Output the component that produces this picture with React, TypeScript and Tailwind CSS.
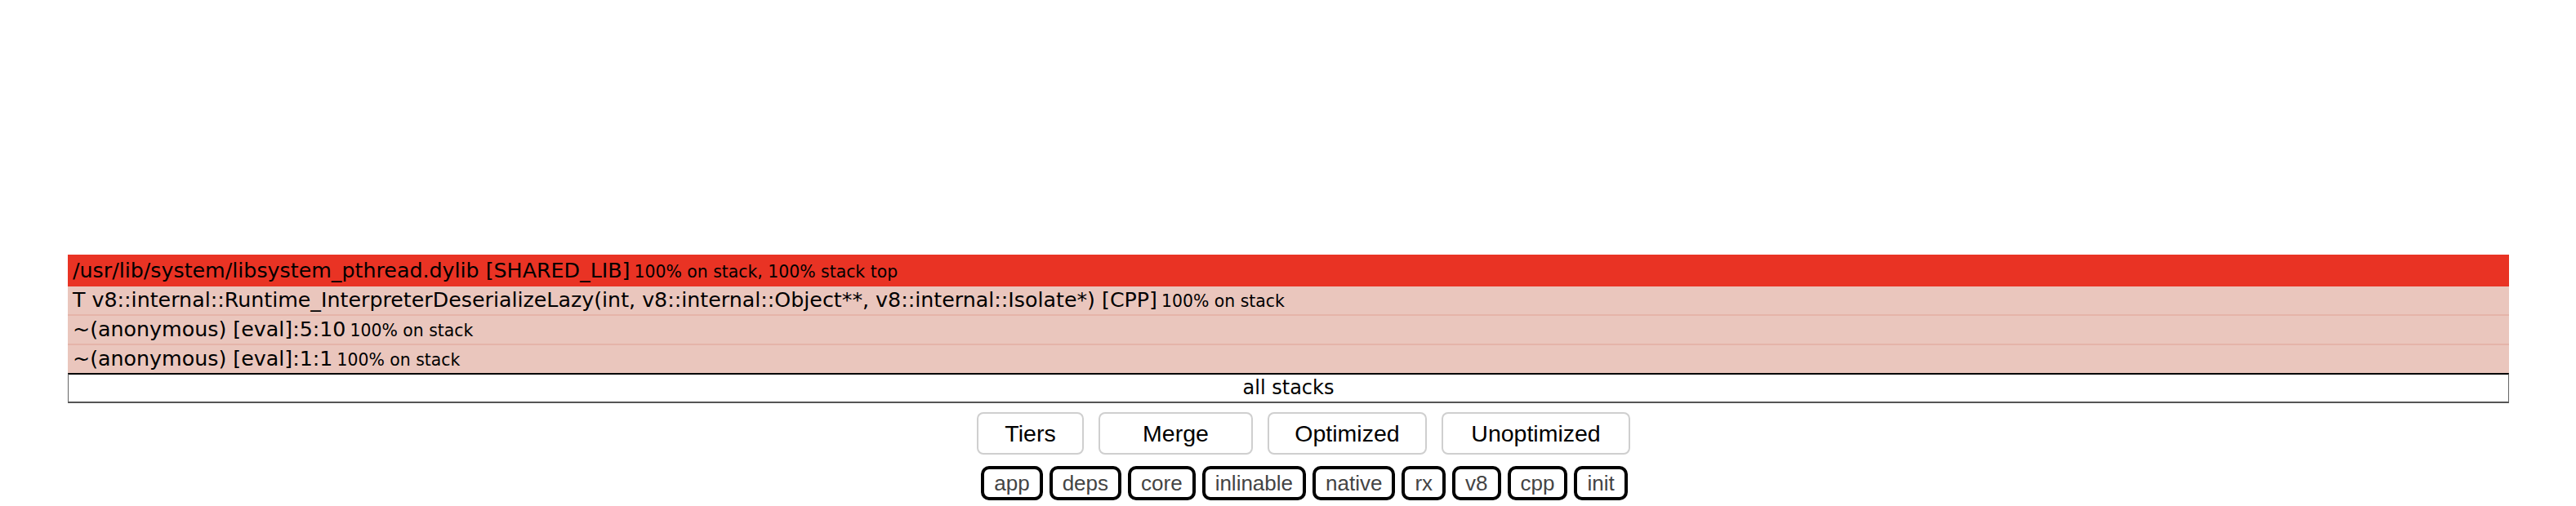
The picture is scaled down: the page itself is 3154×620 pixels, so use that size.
import React from 'react';

interface StackRow {
  name: string;
  stats: string;
  top?: boolean;
}

const ROWS: StackRow[] = [
  { name: '/usr/lib/system/libsystem_pthread.dylib [SHARED_LIB]', stats: '100% on stack, 100% stack top', top: true },
  { name: 'T v8::internal::Runtime_InterpreterDeserializeLazy(int, v8::internal::Object**, v8::internal::Isolate*) [CPP]', stats: '100% on stack' },
  { name: '~(anonymous) [eval]:5:10', stats: '100% on stack' },
  { name: '~(anonymous) [eval]:1:1', stats: '100% on stack' },
];

const MODES = [
  { label: 'Tiers', w: 'w-[131px]' },
  { label: 'Merge', w: 'w-[189px]' },
  { label: 'Optimized', w: 'w-[195px]' },
  { label: 'Unoptimized', w: 'w-[231px]' },
];

const TAGS = ['app', 'deps', 'core', 'inlinable', 'native', 'rx', 'v8', 'cpp', 'init'];

export default function App() {
  return (
    <div className="w-[3154px] h-[620px] bg-white font-['DejaVu_Sans',Verdana,sans-serif] text-black">
      {/* stack table */}
      <div className="pt-[312px] pl-[83px] pr-[82px]">
        {ROWS.map((row, i) => {
          const last = i === ROWS.length - 1;
          return (
            <div
              key={row.name}
              className={
                row.top
                  ? 'h-[39px] leading-[39px] bg-[#e93324] pl-[6px] whitespace-nowrap'
                  : last
                  ? 'h-[34px] leading-[34px] bg-[#eac6bd] pl-[6px] whitespace-nowrap'
                  : 'h-[36px] leading-[34px] bg-[#eac6bd] border-b-2 border-[#e5b4a9] pl-[6px] whitespace-nowrap'
              }
            >
              <span className="text-[25.3px]">{row.name}</span>{' '}
              <span className="text-[20.4px]">{row.stats}</span>
            </div>
          );
        })}
        <div className="h-[37px] border-t-2 border-t-black border-x border-x-[#666] border-b-2 border-b-[#555] text-center text-[24px] leading-[33px]">
          all stacks
        </div>
      </div>

      {/* mode buttons */}
      <div className="mt-[11px] flex justify-center pl-[38px] gap-[18px] font-['Liberation_Sans',Arial,sans-serif]">
        {MODES.map((m) => (
          <button
            key={m.label}
            className={`${m.w} h-[52px] bg-white border-2 border-[#cfcfcf] rounded-[8px] text-[28.5px] text-black`}
          >
            {m.label}
          </button>
        ))}
      </div>

      {/* category tags */}
      <div className="mt-[14px] flex justify-center pl-[40px] gap-[8px] font-['Liberation_Sans',Arial,sans-serif]">
        {TAGS.map((t) => (
          <span
            key={t}
            className="h-[42px] px-[12px] border-4 border-black rounded-[10px] text-[26px] leading-[34px] text-[#444]"
          >
            {t}
          </span>
        ))}
      </div>
    </div>
  );
}
